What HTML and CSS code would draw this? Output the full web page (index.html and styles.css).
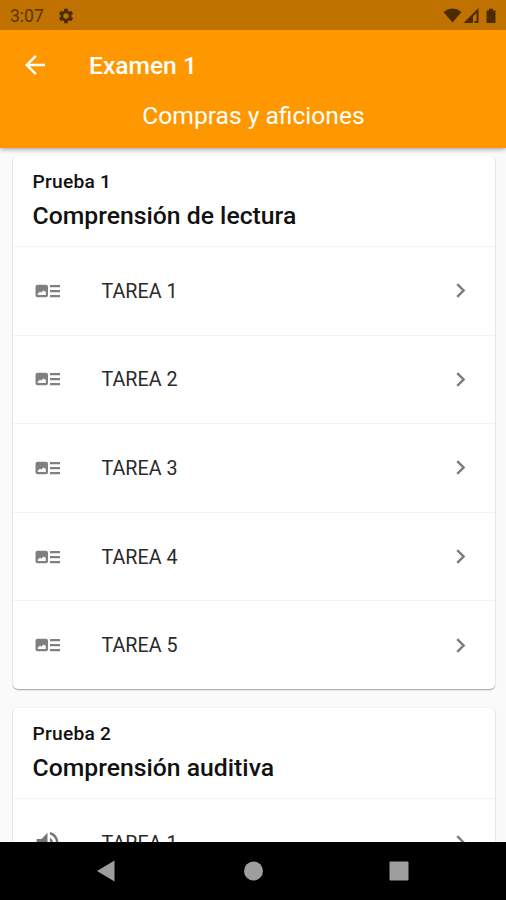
FILE: index.html
```html
<!DOCTYPE html>
<html lang="es">
<head>
<meta charset="utf-8">
<title>Examen 1</title>
<link rel="stylesheet" href="styles.css">
</head>
<body>
<svg width="0" height="0" class="defs">
  <symbol id="reader" viewBox="0 0 26 14"><path fill-rule="evenodd" d="M2.500 .8h8.500a2 2 0 0 1 2 2v8.500a2 2 0 0 1-2 2H2.500a2 2 0 0 1-2-2V2.800a2 2 0 0 1 2-2zM2.800 11h8V8L8.500 6.500 6.500 8.500 5 7.800l-2.200 1.700z"/><path d="M15 1h10v2.200H15zM15 6h10v2.200H15zM15 11h10v2.200H15z"/></symbol>
  <symbol id="chevron" viewBox="0 0 24 24"><path d="M10 6 8.590 7.410 13.170 12l-4.580 4.590L10 18l6-6z"/></symbol>
  <symbol id="volume" viewBox="0 0 24 24"><path d="M3 9v6h4l5 5V4L7 9H3zm13.500 3c0-1.770-1.020-3.290-2.500-4.030v8.050c1.480-.73 2.500-2.250 2.500-4.020zM14 3.230v2.060c2.890.86 5 3.540 5 6.710s-2.110 5.850-5 6.710v2.060c4.010-.91 7-4.490 7-8.770s-2.990-7.860-7-8.770z"/></symbol>
</svg>
<div class="screen">
  <div class="status">
    <span class="time">3:07</span>
    <svg class="gear" viewBox="0 0 24 24"><path fill-rule="evenodd" d="M19.140 12.940c.04-.3.060-.61.060-.94s-.02-.64-.07-.94l2.030-1.580a.49.490 0 0 0 .12-.61l-1.920-3.320a.49.490 0 0 0-.59-.22l-2.390.96a7 7 0 0 0-1.620-.94l-.36-2.540A.48.480 0 0 0 13.920 2.400h-3.840a.48.480 0 0 0-.48.410l-.36 2.540a7 7 0 0 0-1.620.94l-2.390-.96a.48.480 0 0 0-.59.220L2.720 8.870a.48.480 0 0 0 .12.610l2.030 1.580a7 7 0 0 0 0 1.880l-2.030 1.580a.49.490 0 0 0-.12.610l1.920 3.320c.12.220.37.290.59.220l2.390-.96c.5.380 1.030.7 1.620.94l.36 2.540c.05.240.24.410.48.410h3.840c.24 0 .44-.17.470-.41l.36-2.540a7 7 0 0 0 1.620-.94l2.390.96c.22.080.47 0 .59-.22l1.920-3.320a.48.480 0 0 0-.12-.61zM12 15.600a3.600 3.600 0 1 1 0-7.200 3.600 3.600 0 0 1 0 7.200z"/></svg>
    <svg class="signals" viewBox="0 0 56 18"><path d="M.5 5Q9.500-1.800 18.500 5L9.500 15.500zM20.500 16 35.500 1v15h-2V6l-3.500 3.500V16zM31.500 14v2h2v-2zM46 1.800h4v1.700h2.500V16h-9V3.500H46z"/></svg>
  </div>
  <header class="appbar">
    <div class="toolbar">
      <svg class="back" viewBox="0 0 24 24"><path d="M20 11H7.830l5.590-5.590L12 4l-8 8 8 8 1.410-1.410L7.830 13H20z"/></svg>
      <h1>Examen 1</h1>
    </div>
    <p class="subtitle">Compras y aficiones</p>
  </header>
  <main>
    <section class="card">
      <div class="head"><h3>Prueba 1</h3><h2>Comprensión de lectura</h2></div>
      <div class="row"><svg class="reader"><use href="#reader"/></svg><span class="label">TAREA 1</span><svg class="chev"><use href="#chevron"/></svg></div>
      <div class="row"><svg class="reader"><use href="#reader"/></svg><span class="label">TAREA 2</span><svg class="chev"><use href="#chevron"/></svg></div>
      <div class="row"><svg class="reader"><use href="#reader"/></svg><span class="label">TAREA 3</span><svg class="chev"><use href="#chevron"/></svg></div>
      <div class="row"><svg class="reader"><use href="#reader"/></svg><span class="label">TAREA 4</span><svg class="chev"><use href="#chevron"/></svg></div>
      <div class="row"><svg class="reader"><use href="#reader"/></svg><span class="label">TAREA 5</span><svg class="chev"><use href="#chevron"/></svg></div>
    </section>
    <section class="card">
      <div class="head"><h3>Prueba 2</h3><h2>Comprensión auditiva</h2></div>
      <div class="row"><svg class="volume"><use href="#volume"/></svg><span class="label">TAREA 1</span><svg class="chev"><use href="#chevron"/></svg></div>
    </section>
  </main>
  <nav class="navbar">
    <svg viewBox="0 0 20 22"><path d="M1 11 18.500.5v21z"/></svg>
    <svg viewBox="0 0 20 22"><circle cx="10.500" cy="11" r="9.500"/></svg>
    <svg viewBox="0 0 20 22"><rect x=".5" y="1.500" width="19" height="19" rx="1"/></svg>
  </nav>
</div>
</body>
</html>
```

FILE: styles.css
```css
* { box-sizing: border-box; margin: 0; }
body { font-family: Roboto, sans-serif; color: #111; }
svg { display: block; flex: none; }
.defs { position: absolute; }
.screen { width: 506px; height: 900px; display: flex; flex-direction: column; overflow: hidden; background: #fafafa; }
.status { flex: none; height: 30px; display: flex; align-items: center; padding: 1px 7px 0 10px; background: #bf7200; color: #593500; fill: #4a2c00; position: relative; z-index: 1; }
.time { font-size: 17.500px; width: 47px; }
.gear { width: 18px; height: 18px; }
.signals { width: 56px; height: 18px; margin-left: auto; }
.appbar { flex: none; height: 118px; background: #ff9800; color: #fff; position: relative; box-shadow: 0 1px 5px rgba(0,0,0,.4); }
.toolbar { height: 69px; display: flex; align-items: center; padding-left: 20px; }
.back { width: 30px; height: 30px; fill: #fff; }
h1 { margin-left: 39px; font-size: 24.600px; font-weight: 500; line-height: 30px; padding-top: 2px; }
.subtitle { text-align: center; font-size: 24.600px; line-height: 30px; padding: 2px 0 0 1px; }
main { flex: 1; min-height: 0; overflow: hidden; padding: 8px 11.500px 0 12.500px; }
.card { background: #fff; border-radius: 5px; margin-bottom: 19px; box-shadow: 0 1px 1.500px rgba(0,0,0,.36), 0 0 2px rgba(0,0,0,.06); }
.head { height: 90px; padding: 14px 20px 0; }
h3 { font-size: 19.200px; line-height: 24px; font-weight: 500; letter-spacing: .25px; }
h2 { font-size: 24.750px; line-height: 30px; font-weight: 500; margin-top: 7px; }
.row { height: 88.600px; border-top: 1px solid #f3f3f3; display: flex; align-items: center; padding: 0 20px 0 22px; }
.reader { width: 26px; height: 14px; margin-right: 41px; fill: #808080; }
.volume { width: 29px; height: 29px; margin: 0 40px 0 -2px; fill: #757575; }
.label { font-size: 19.700px; flex: 1; color: #2a2a2a; padding-top: 1px; }
.chev { width: 29px; height: 29px; fill: #7c7c7c; }
.navbar { flex: none; height: 58px; background: #000; display: flex; justify-content: space-between; padding: 18px 97px 0 96px; fill: #9e9e9e; }
.navbar svg { width: 20px; height: 22px; }
```
